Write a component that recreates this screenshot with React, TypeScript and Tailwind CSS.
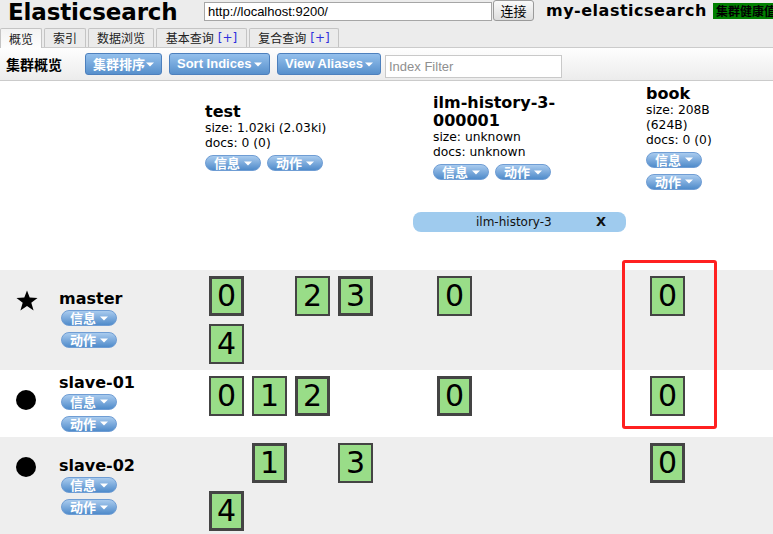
import clsx from 'clsx'
import type { ReactNode } from 'react'

type Shard = { n?: number; p?: boolean }

type NodeRow = {
    name: string
    icon: 'star' | 'dot'
    rowClass: string
    test: Shard[]
    ilm: Shard[]
    book: Shard[]
}

const nodes: NodeRow[] = [
    {
        name: 'master',
        icon: 'star',
        rowClass: 'h-[100px] bg-[#eeeeee]',
        test: [{ n: 0, p: true }, {}, { n: 2 }, { n: 3, p: true }, { n: 4 }],
        ilm: [{ n: 0 }],
        book: [{ n: 0 }],
    },
    {
        name: 'slave-01',
        icon: 'dot',
        rowClass: 'h-[67px] bg-white',
        test: [{ n: 0 }, { n: 1 }, { n: 2, p: true }],
        ilm: [{ n: 0, p: true }],
        book: [{ n: 0 }],
    },
    {
        name: 'slave-02',
        icon: 'dot',
        rowClass: 'h-[100px] bg-[#eeeeee]',
        test: [{}, { n: 1, p: true }, {}, { n: 3 }, { n: 4, p: true }],
        ilm: [],
        book: [{ n: 0, p: true }],
    },
]

const tabs = [
    { label: '概览', w: 'w-[42px]', active: true },
    { label: '索引', w: 'w-[42px]' },
    { label: '数据浏览', w: 'w-[66px]' },
    { label: '基本查询', w: 'w-[91px]', plus: true },
    { label: '复合查询', w: 'w-[90px]', plus: true },
]

function Caret() {
    return <svg width="8" height="5" viewBox="0 0 8 5" className="shrink-0">
        <path d="M0 0.5h8L4 4.5z" fill="white" />
    </svg>
}

function Pill({ label }: { label: string }) {
    return <div className="flex h-[16px] w-[56px] shrink-0 items-center justify-between rounded-full border border-[#6f9dd4] bg-linear-to-b from-[#a9cbee] to-[#4f8bca] pl-[8px] pr-[8px] font-[family-name:'Noto_Sans_CJK_SC',sans-serif] text-[13px] font-bold leading-[14px] text-white">
        <span>{label}</span>
        <Caret />
    </div>
}

function ToolButton({ label, className }: { label: string; className: string }) {
    return <div className={clsx('flex h-[22px] shrink-0 items-center justify-between rounded-[3px] border border-[#4d80bd] bg-linear-to-b from-[#94c0ec] to-[#5790cc] px-[7px] text-[13px] font-bold text-white', className)}>
        <span>{label}</span>
        <Caret />
    </div>
}

function ShardBox({ n, p }: Shard) {
    if (n === undefined) return <div className="m-[4px] h-[40px] w-[35px]" />
    return <div className={clsx('m-[4px] flex h-[40px] w-[35px] items-center justify-center border-[#444444] bg-[#99dd88] text-[30px] leading-none text-black', p ? 'border-[3px]' : 'border-2')}>
        {n}
    </div>
}

function IndexInfo({ name, lines, stacked }: { name: ReactNode; lines: ReactNode[]; stacked?: boolean }) {
    return <div className={stacked ? 'w-[100px]' : ''}>
        <div className="text-[16px] font-bold leading-[18px]">{name}</div>
        {lines.map((l, i) => <div key={i} className="text-[12.3px] leading-[15px]">{l}</div>)}
        <div className="mt-[4px] flex flex-wrap gap-[6px]">
            <Pill label="信息" />
            <Pill label="动作" />
        </div>
    </div>
}

function NodeIcon({ icon }: { icon: 'star' | 'dot' }) {
    if (icon === 'star') {
        return <svg width="22" height="21" viewBox="0 0 22 21">
            <polygon points="11,0.5 13.7,7.6 21.5,7.9 15.3,12.7 17.6,20.5 11,15.9 4.4,20.5 6.7,12.7 0.5,7.9 8.3,7.6" fill="black" />
        </svg>
    }
    return <div className="h-[20px] w-[20px] rounded-full bg-black" />
}

function Header() {
    return <div className="h-[47px] bg-[#ececec]">
        <div className="flex h-[28px] items-start whitespace-nowrap">
            <div className="ml-[8px] w-[196px] shrink-0 text-[23px] font-bold leading-[24px] tracking-[-0.15px]">Elasticsearch</div>
            <input readOnly value="http://localhost:9200/" className="mt-[2px] h-[19px] w-[288px] shrink-0 border border-[#a6a6a6] bg-white px-[3px] font-[family-name:'Liberation_Sans',sans-serif] text-[13px] leading-[17px] outline-none" />
            <div className="ml-[1px] flex h-[21px] w-[41px] shrink-0 items-center justify-center rounded-[3px] border border-[#9a9a9a] bg-linear-to-b from-[#fafafa] to-[#dddddd] font-[family-name:'Noto_Sans_CJK_SC',sans-serif] text-[13px]">连接</div>
            <div className="ml-[12px] mt-[1px] shrink-0 text-[16px] font-bold leading-[20px] tracking-[0.5px]">my-elasticsearch</div>
            <div className="ml-[6px] mt-[3px] h-[16px] shrink-0 bg-[#008000] pl-[3px] pr-[8px] font-[family-name:'Noto_Sans_CJK_SC',sans-serif] text-[12px] font-bold leading-[16px] text-black">集群健康值: green (16 of 16)</div>
        </div>
        <div className="flex h-[19px] items-start gap-[2px]">
            {tabs.map(t => (
                <div key={t.label} className={clsx('flex shrink-0 items-center justify-center rounded-t-[2px] border border-b-0 border-[#c4c4c4] text-[12px] leading-[18px] text-[#222222]', t.w, t.active ? 'relative z-10 h-[20px] bg-linear-to-b from-[#f3f3f3] to-[#fdfdfd]' : 'h-[19px] bg-[#ebebeb]')}>
                    <span className="font-[family-name:'Noto_Sans_CJK_SC',sans-serif]">{t.label}</span>
                    {t.plus && <span className="ml-[4px] text-[#2f2fdd]">[+]</span>}
                </div>
            ))}
        </div>
    </div>
}

function Toolbar() {
    return <div className="flex h-[34px] items-center border-y border-[#cbcbcb] bg-linear-to-b from-[#fefefe] to-[#ececec] font-[family-name:'Liberation_Sans','Noto_Sans_CJK_SC',sans-serif]">
        <div className="ml-[6px] w-[79px] shrink-0 font-[family-name:'Noto_Sans_CJK_SC',sans-serif] text-[14px] font-bold">集群概览</div>
        <ToolButton label="集群排序" className="w-[77px] font-[family-name:'Noto_Sans_CJK_SC',sans-serif]" />
        <ToolButton label="Sort Indices" className="ml-[7px] w-[101px]" />
        <ToolButton label="View Aliases" className="ml-[7px] w-[104px]" />
        <input placeholder="Index Filter" className="ml-[4px] mt-[5px] h-[23px] w-[177px] shrink-0 border border-[#c9c9c9] bg-white px-[3px] text-[13px] outline-none placeholder:text-[#8f8f8f]" />
    </div>
}

function Overview() {
    return <div>
        <div className="flex h-[112px]">
            <div className="w-[200px] shrink-0" />
            <div className="flex w-[213px] shrink-0 items-center pl-[5px]">
                <IndexInfo name="test" lines={['size: 1.02ki (2.03ki)', 'docs: 0 (0)']} />
            </div>
            <div className="flex w-[213px] shrink-0 items-center pl-[20px]">
                <IndexInfo name={<>ilm-history-3-<br />000001</>} lines={['size: unknown', 'docs: unknown']} />
            </div>
            <div className="flex w-[147px] shrink-0 items-center pl-[20px]">
                <IndexInfo name="book" lines={['size: 208B (624B)', 'docs: 0 (0)']} stacked />
            </div>
        </div>
        <div className="flex h-[77px] items-start">
            <div className="w-[413px] shrink-0" />
            <div className="mt-[19px] flex h-[20px] w-[213px] shrink-0 items-center rounded-[8px] bg-[#9fcbee] pl-[63px] pr-[20px] text-[12px] text-[#111111]">
                <span>ilm-history-3</span>
                <span className="ml-auto text-[13px] font-bold">X</span>
            </div>
        </div>
        {nodes.map(node => (
            <div key={node.name} className={clsx('flex', node.rowClass)}>
                <div className="w-[50px] shrink-0 pl-[16px] pt-[20px]">
                    <NodeIcon icon={node.icon} />
                </div>
                <div className="flex w-[150px] shrink-0 items-center pl-[9px]">
                    <div className="pb-[3px]">
                        <div className="text-[16px] font-bold leading-[19px]">{node.name}</div>
                        <div className="ml-[2px] mt-[2px] flex flex-col gap-[6px]">
                            <Pill label="信息" />
                            <Pill label="动作" />
                        </div>
                    </div>
                </div>
                <div className="flex w-[213px] shrink-0 flex-wrap content-start pl-[5px] pt-[2px]">
                    {node.test.map((s, i) => <ShardBox key={i} {...s} />)}
                </div>
                <div className="flex w-[213px] shrink-0 flex-wrap content-start pl-[20px] pt-[2px]">
                    {node.ilm.map((s, i) => <ShardBox key={i} {...s} />)}
                </div>
                <div className="flex w-[147px] shrink-0 flex-wrap content-start pl-[20px] pt-[2px]">
                    {node.book.map((s, i) => <ShardBox key={i} {...s} />)}
                </div>
            </div>
        ))}
    </div>
}

export default function App() {
    return <div className="relative h-[534px] w-[773px] overflow-hidden bg-white font-[family-name:'DejaVu_Sans','Noto_Sans_CJK_SC',sans-serif] text-black">
        <Header />
        <Toolbar />
        <Overview />
        <div className="absolute left-[622px] top-[260px] h-[169px] w-[95px] rounded-[3px] border-[3px] border-[#ff2020]" />
    </div>
}
